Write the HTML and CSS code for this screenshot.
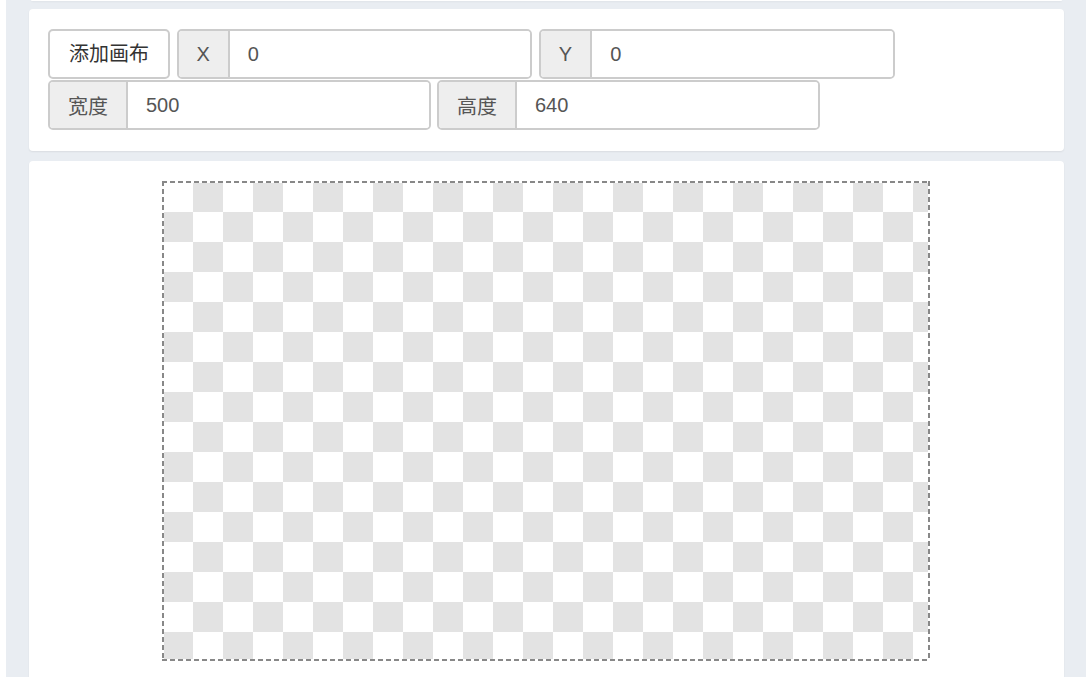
FILE: index.html
```html
<!DOCTYPE html>
<html lang="zh-CN">
<head>
<meta charset="utf-8">
<title>画布</title>
<link rel="stylesheet" href="styles.css">
</head>
<body>
<div class="page">
  <div class="card-tail"></div>
  <div class="card toolbar">
    <button class="btn" type="button">添加画布</button>
    <div class="group"><span class="addon addon-sm">X</span><input class="field" type="text" value="0"></div>
    <div class="group"><span class="addon addon-sm">Y</span><input class="field" type="text" value="0"></div>
    <div class="group"><span class="addon">宽度</span><input class="field" type="text" value="500"></div>
    <div class="group"><span class="addon">高度</span><input class="field" type="text" value="640"></div>
  </div>
  <div class="card stage">
    <div class="canvas-frame"><div class="canvas"></div></div>
  </div>
</div>
</body>
</html>
```
FILE: styles.css
```css
html, body {
  margin: 0;
  padding: 0;
  background: #ffffff;
  height: 100%;
  overflow: hidden;
}
body {
  font-family: "Liberation Sans", "Noto Sans CJK SC", sans-serif;
  color: #333;
}
.page {
  margin-left: 6px;
  background: #e9edf2;
  padding: 0 22px 0 23px;
  min-height: 100%;
}
.card-tail {
  height: 1px;
  margin: 0 2px 8px;
  background: #fff;
  border-radius: 0 0 4px 4px;
  box-shadow: 0 1px 2px rgba(0,0,0,0.06);
}
.card {
  background: #fff;
  border-radius: 4px;
  box-shadow: 0 1px 2px rgba(0,0,0,0.07);
  margin-bottom: 10px;
}
.toolbar {
  display: flex;
  flex-wrap: wrap;
  align-items: flex-start;
  column-gap: 6.5px;
  row-gap: 1px;
  padding: 20px 20px 21px 19px;
}
.btn {
  height: 50px;
  box-sizing: border-box;
  padding: 0 19px;
  border: 2px solid #cccccc;
  border-radius: 5px;
  background: #fff;
  color: #333;
  font-family: inherit;
  font-size: 20px;
  line-height: 46px;
}
.group {
  display: inline-flex;
  height: 50px;
  box-sizing: border-box;
  border: 2px solid #cccccc;
  border-radius: 5px;
  overflow: hidden;
}
.addon {
  display: flex;
  align-items: center;
  padding: 0 18px;
  background: #eeeeee;
  border-right: 2px solid #cccccc;
  color: #555;
  font-size: 20px;
}
.field {
  width: 300.5px;
  box-sizing: border-box;
  border: 0;
  outline: none;
  padding: 0 18px;
  font-family: inherit;
  font-size: 20px;
  color: #555;
  background: #fff;
}
.stage {
  display: flex;
  justify-content: center;
  padding: 20px 21px 40px 20px;
}
.canvas-frame {
  padding: 2px;
  background:
    linear-gradient(to right, #888 62%, transparent 0) top left / 8px 2px repeat-x,
    linear-gradient(to right, #888 62%, transparent 0) bottom left / 8px 2px repeat-x,
    linear-gradient(to bottom, #888 62%, transparent 0) top left / 2px 8px repeat-y,
    linear-gradient(to bottom, #888 62%, transparent 0) top right / 2px 8px repeat-y;
}
.canvas {
  width: 764px;
  height: 476px;
  background: conic-gradient(#e3e3e3 0 25%, #ffffff 0 50%, #e3e3e3 0 75%, #ffffff 0) -1px -1px / 60px 60px;
}
```
